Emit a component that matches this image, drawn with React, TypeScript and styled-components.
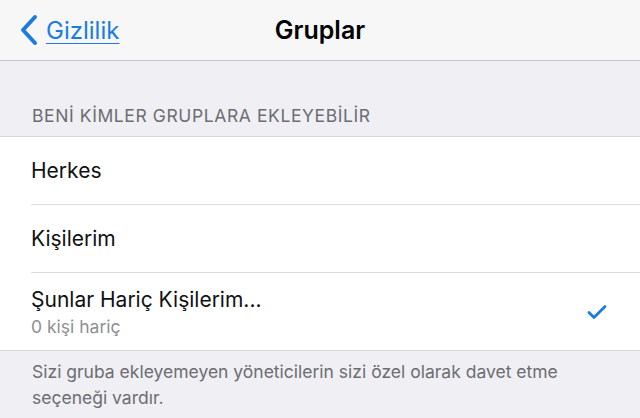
import React from 'react';
import styled, { createGlobalStyle } from 'styled-components';

const Global = createGlobalStyle`
  html, body {
    margin: 0;
    padding: 0;
    background: #efeff4;
    font-family: Inter, "Noto Sans", "Liberation Sans", sans-serif;
    -webkit-font-smoothing: antialiased;
  }
`;

const Page = styled.div`
  width: 640px;
  height: 418px;
  overflow: hidden;
  background: #efeff4;
`;

const NavBar = styled.div`
  height: 60px;
  display: grid;
  grid-template-columns: 1fr auto 1fr;
  align-items: center;
  background: #f7f7f7;
  border-bottom: 1px solid #c8c7cc;
`;

const Back = styled.a`
  display: flex;
  align-items: center;
  gap: 7px;
  padding-left: 19px;
  color: #1a7be2;
  font-size: 24px;
  text-decoration: underline;
  text-decoration-thickness: 1px;
  text-underline-offset: 4px;
`;

const Title = styled.div`
  font-size: 25px;
  font-weight: 600;
  color: #000;
`;

const SectionHeader = styled.div`
  padding: 44px 0 10px 32px;
  font-size: 17.5px;
  color: #6d6d72;
  letter-spacing: 0.6px;
`;

const List = styled.div`
  background: #fff;
  border-top: 1px solid #d8d8dc;
  border-bottom: 1px solid #d8d8dc;
`;

const Row = styled.div<{ $tall?: boolean; $last?: boolean }>`
  display: flex;
  align-items: center;
  justify-content: space-between;
  margin-left: 31px;
  padding-right: 33px;
  height: ${p => (p.$tall ? '77px' : '67px')};
  border-bottom: ${p => (p.$last ? 'none' : '1px solid #dcdce0')};
`;

const Labels = styled.div`
  display: flex;
  flex-direction: column;
  gap: 4px;
`;

const Label = styled.div`
  font-size: 21px;
  color: #111;
`;

const Sub = styled.div`
  font-size: 17.5px;
  color: #8e8e93;
`;

const Footer = styled.div`
  padding: 8px 32px 0;
  font-size: 17.5px;
  line-height: 26px;
  color: #6d6d72;
`;

function Chevron() {
  return (
    <svg width="20" height="32" viewBox="0 0 20 32">
      <path d="M16 3 L4 16 L16 29" fill="none" stroke="#1a7be2" strokeWidth="4" strokeLinecap="round" strokeLinejoin="round" />
    </svg>
  );
}

function Check() {
  return (
    <svg width="20" height="16" viewBox="0 0 20 16">
      <path d="M2 8.5 L7 13.5 L18 2.5" fill="none" stroke="#1a7be2" strokeWidth="2.8" strokeLinecap="round" strokeLinejoin="round" />
    </svg>
  );
}

export default function App() {
  return (
    <Page>
      <Global />
      <NavBar>
        <Back><Chevron />Gizlilik</Back>
        <Title>Gruplar</Title>
        <div />
      </NavBar>
      <SectionHeader>BENİ KİMLER GRUPLARA EKLEYEBİLİR</SectionHeader>
      <List>
        <Row><Label>Herkes</Label></Row>
        <Row><Label>Kişilerim</Label></Row>
        <Row $tall $last>
          <Labels>
            <Label>Şunlar Hariç Kişilerim...</Label>
            <Sub>0 kişi hariç</Sub>
          </Labels>
          <Check />
        </Row>
      </List>
      <Footer>
        Sizi gruba ekleyemeyen yöneticilerin sizi özel olarak davet etme seçeneği vardır.
      </Footer>
    </Page>
  );
}
